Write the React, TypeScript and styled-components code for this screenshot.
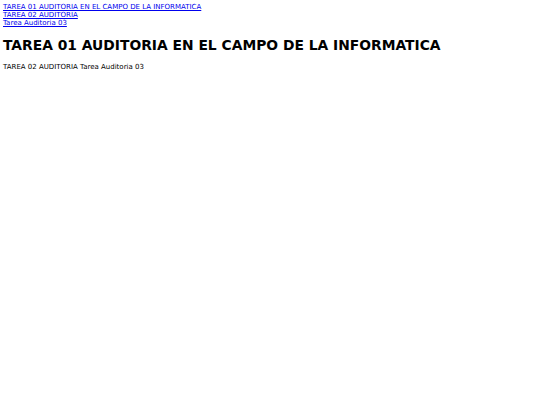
import React from 'react';
import styled, { createGlobalStyle } from 'styled-components';

const GlobalStyle = createGlobalStyle`
  body {
    margin: 0;
    background: #fff;
    font-family: "DejaVu Sans", Verdana, sans-serif;
  }
`;

const Page = styled.div`
  padding: 3px 3px;
  color: #000;
`;

const Nav = styled.nav`
  display: flex;
  flex-direction: column;
  font-size: 7px;
  line-height: 8px;
`;

const NavLink = styled.a`
  color: #0000ee;
  text-decoration: underline;
  width: fit-content;
`;

const Title = styled.h1`
  margin: 10px 0 0;
  font-size: 13.85px;
  line-height: 16px;
  font-weight: bold;
`;

const Line = styled.p`
  margin: 10px 0 0;
  font-size: 7px;
  line-height: 8px;
`;

const links = [
  'TAREA 01 AUDITORIA EN EL CAMPO DE LA INFORMATICA',
  'TAREA 02 AUDITORIA',
  'Tarea Auditoria 03',
];

const App = () => {
  return (
    <>
      <GlobalStyle />
      <Page>
        <Nav>
          {links.map((l) => (
            <NavLink key={l} href="#">
              {l}
            </NavLink>
          ))}
        </Nav>
        <Title>TAREA 01 AUDITORIA EN EL CAMPO DE LA INFORMATICA</Title>
        <Line>TAREA 02 AUDITORIA Tarea Auditoria 03</Line>
      </Page>
    </>
  );
};

export default App;
